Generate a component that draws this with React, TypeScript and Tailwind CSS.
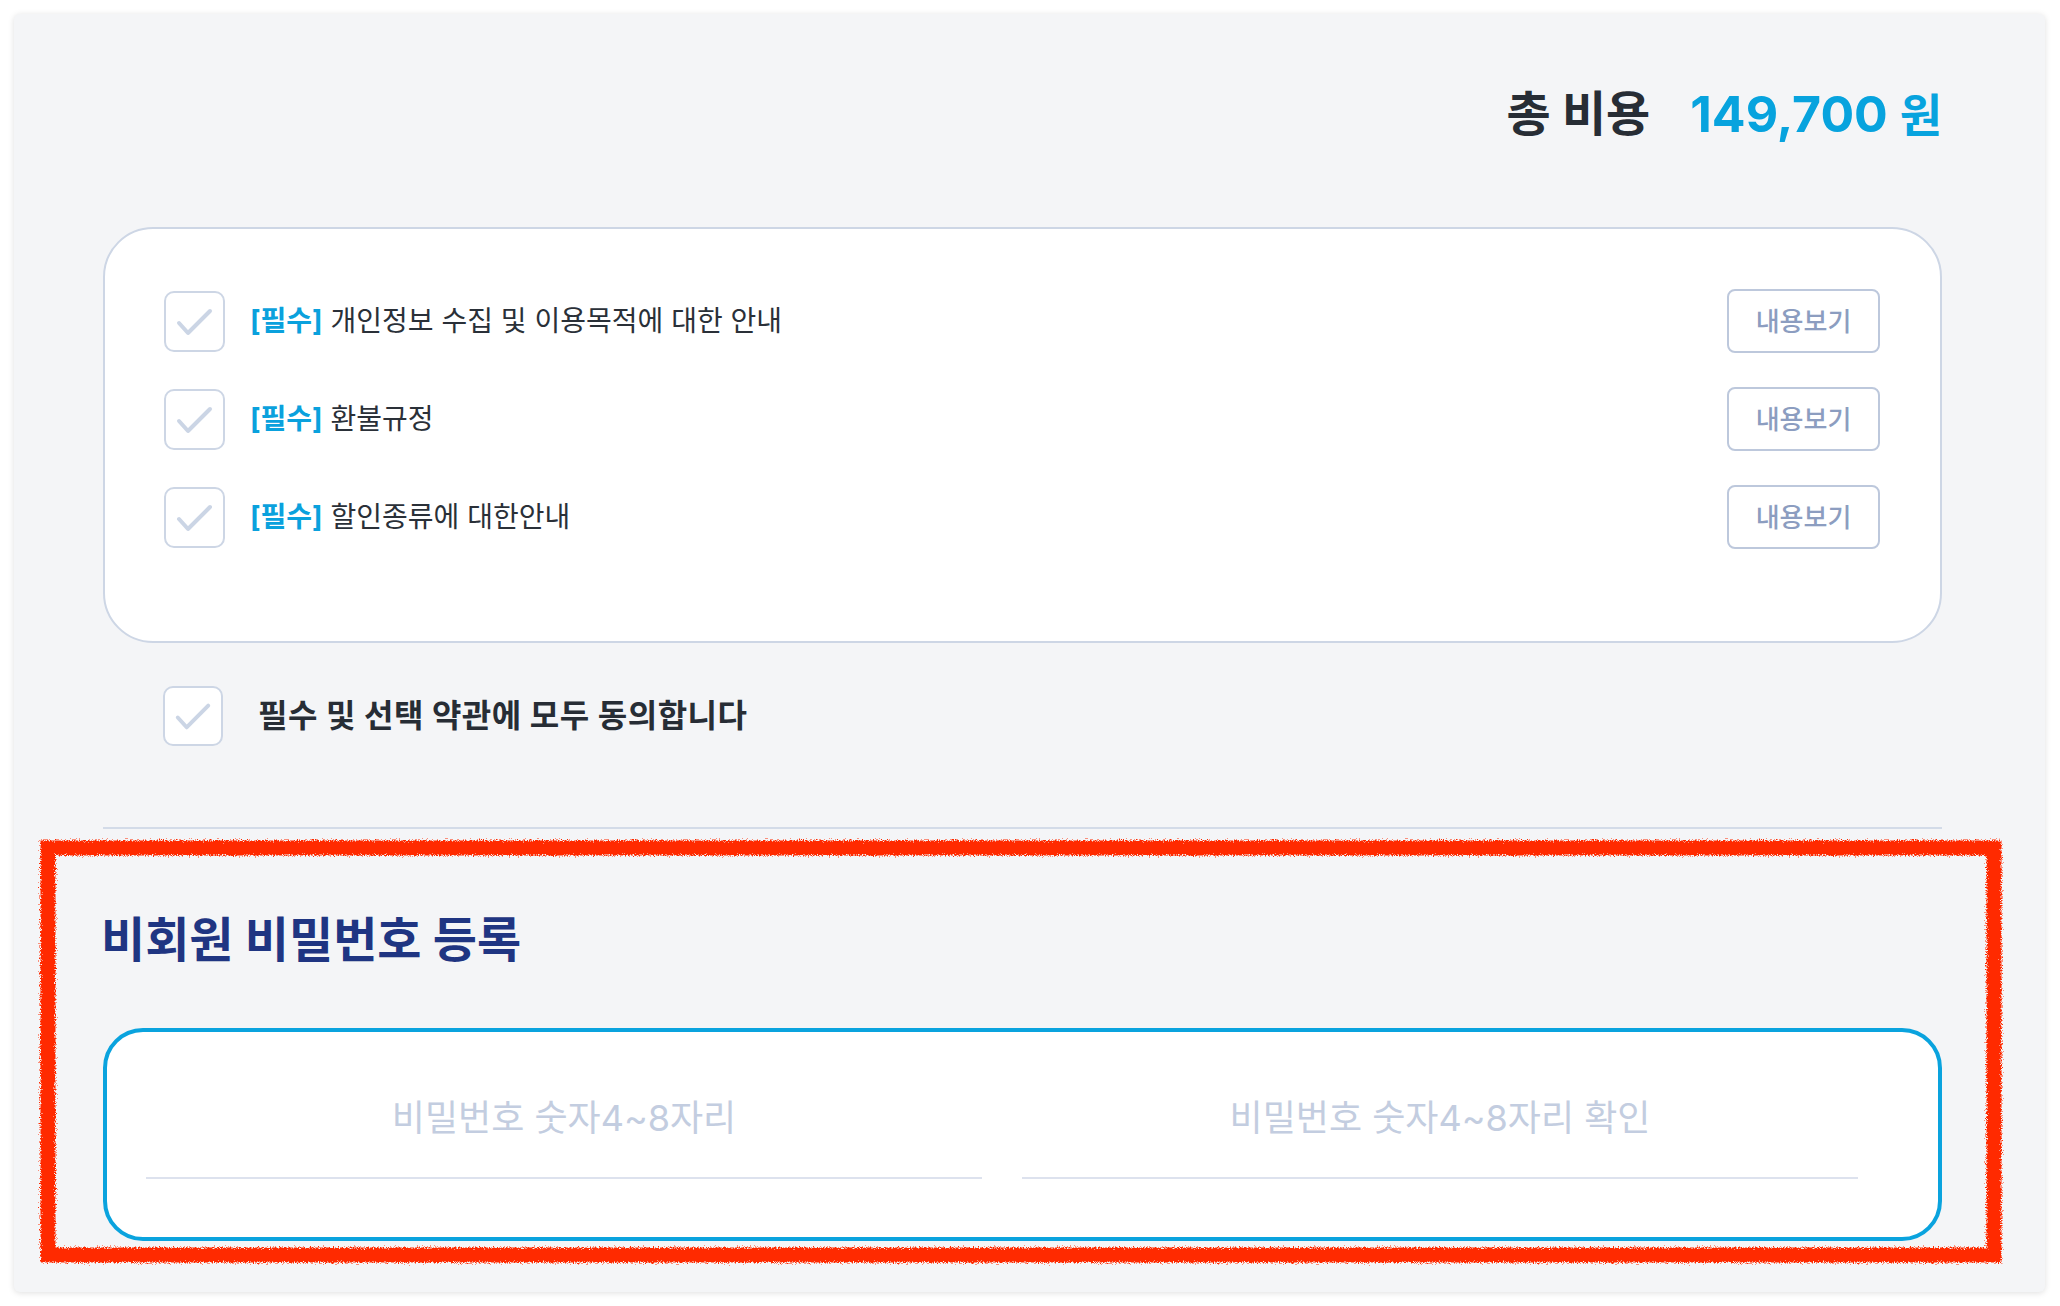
import React from "react";

const FONT = { fontFamily: "Inter, 'Noto Sans CJK KR', 'Noto Sans', sans-serif" };

function CheckBox({ size = 61 }: { size?: number }) {
  return (
    <div
      className="shrink-0 rounded-[10px] border-2 border-[#cdd6e5] bg-white"
      style={{ width: size, height: size }}
    >
      <svg viewBox="0 0 57 57" className="h-full w-full">
        <path
          d="M13 30 L22 40 L44 18"
          fill="none"
          stroke="#cbd5e5"
          strokeWidth="4"
          strokeLinecap="round"
          strokeLinejoin="round"
        />
      </svg>
    </div>
  );
}

function TermRow({ title }: { title: string }) {
  return (
    <div className="flex h-[64px] items-center">
      <CheckBox />
      <div className="ml-[25px] flex-1 text-[28px] leading-[40px] text-[#2a3038]">
        <span className="font-bold text-[#0aa1dd]">[필수]</span> {title}
      </div>
      <button className="flex h-[64px] w-[153px] items-center justify-center rounded-[8px] border-2 border-[#bdc8dc] bg-white text-[26px] font-medium text-[#8c9dc0]">
        내용보기
      </button>
    </div>
  );
}

export default function App() {
  return (
    <div className="relative h-[1306px] w-[2060px] bg-white pt-[14px] pl-[14px]" style={FONT}>
      <div className="flex h-[1278px] w-[2031px] flex-col rounded-[6px] bg-[#f4f5f7] pt-[70px] pl-[89px] pr-[103px] shadow-[0_1px_6px_rgba(0,0,0,0.13)]">
        {/* total */}
        <div className="flex h-[60px] items-center justify-end">
          <span className="text-[48px] font-bold text-[#272d35]">총 비용</span>
          <span className="ml-[40px] text-[50px] font-bold text-[#07a3de]">
            149,700 <span className="text-[46px]">원</span>
          </span>
        </div>

        {/* terms card */}
        <div className="mt-[83px] flex flex-col gap-[34px] rounded-[50px] border-2 border-[#cdd6e5] bg-white pt-[60px] pb-[92px] pl-[59px] pr-[60px]">
          <TermRow title="개인정보 수집 및 이용목적에 대한 안내" />
          <TermRow title="환불규정" />
          <TermRow title="할인종류에 대한안내" />
        </div>

        {/* agree all */}
        <div className="mt-[43px] flex h-[60px] items-center pl-[60px]">
          <CheckBox size={60} />
          <div className="ml-[35px] text-[32px] font-bold tracking-[0.5px] text-[#272d35]">
            필수 및 선택 약관에 모두 동의합니다
          </div>
        </div>

        {/* divider */}
        <div className="mt-[81px] h-[2px] bg-[#d3dbe8]" />

        {/* heading */}
        <h2 className="mt-[83px] -ml-[2px] text-[48px] leading-[56px] font-bold text-[#1f3582]">
          비회원 비밀번호 등록
        </h2>

        {/* password box */}
        <div className="mt-[60px] flex h-[213px] gap-[40px] rounded-[40px] border-4 border-[#0aa3de] bg-white pl-[39px] pr-[80px]">
          <div className="h-[147px] flex-1 border-b-2 border-[#dde2ee] pt-[66px] text-center text-[36px] leading-[40px] text-[#c3cde0]">
            비밀번호 숫자4~8자리
          </div>
          <div className="h-[147px] flex-1 border-b-2 border-[#dde2ee] pt-[66px] text-center text-[36px] leading-[40px] text-[#c3cde0]">
            비밀번호 숫자4~8자리 확인
          </div>
        </div>
      </div>

      {/* annotation overlay */}
      <svg
        className="pointer-events-none absolute left-[32px] top-[832px]"
        width={1978}
        height={439}
      >
        <defs>
          <filter id="rough" x="-2%" y="-5%" width="104%" height="110%">
            <feTurbulence type="fractalNoise" baseFrequency="0.8" numOctaves="2" seed="3" />
            <feDisplacementMap in="SourceGraphic" scale="7" />
          </filter>
        </defs>
        <rect
          x={16}
          y={16}
          width={1946}
          height={407}
          fill="none"
          stroke="#ff2a00"
          strokeWidth={15}
          filter="url(#rough)"
        />
      </svg>
    </div>
  );
}
